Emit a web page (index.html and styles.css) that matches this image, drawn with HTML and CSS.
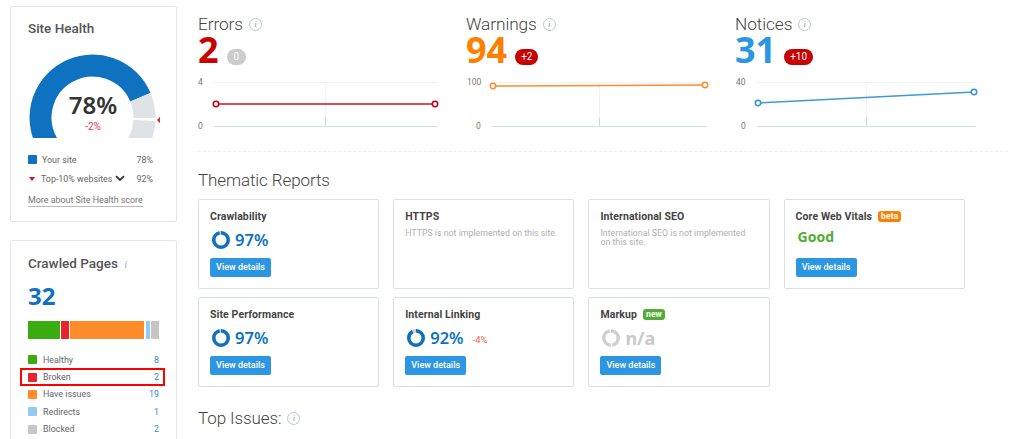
FILE: index.html
```html
<!DOCTYPE html>
<html lang="en">
<head>
<meta charset="utf-8">
<title>Site Audit</title>
<link rel="stylesheet" href="styles.css">
</head>
<body>
<div class="page">
  <aside class="side">
    <section class="panel health">
      <h2 class="panel-title">Site Health</h2>
      <div class="gauge">
        <svg class="gauge-svg" viewBox="28 54 134 84" width="134" height="84">
          <path class="arc-blue" d="M49.9 147.3A52 52 0 1 1 140.4 97.2"/>
          <path class="arc-gray" d="M140.4 97.2A52 52 0 0 1 144.5 118"/>
          <path class="arc-gray" d="M144.5 120.5A52 52 0 0 1 135.1 147.3"/>
          <path class="marker" d="M157 120l3-3.2v6.4z"/>
        </svg>
        <div class="gauge-label">
          <div class="gauge-value">78%</div>
          <div class="gauge-delta">-2%</div>
        </div>
      </div>
      <ul class="legend health-legend">
        <li class="legend-row"><span class="sq sq-site"></span><span class="legend-name">Your site</span><span class="legend-num">78%</span></li>
        <li class="legend-row"><span class="tri"></span><span class="legend-name">Top-10% websites</span>
          <svg class="chev" viewBox="0 0 10 7" width="10" height="7"><path d="M1 1.2l4 3.8 4-3.8"/></svg>
          <span class="legend-num">92%</span></li>
      </ul>
      <a class="more" href="#">More about Site Health score</a>
    </section>
    <section class="panel crawled">
      <h2 class="panel-title">Crawled Pages <span class="mini-i">i</span></h2>
      <div class="crawl-count">32</div>
      <div class="stack">
        <span class="seg seg-g"></span><span class="seg seg-r"></span><span class="seg seg-o"></span><span class="seg seg-b"></span><span class="seg seg-k"></span>
      </div>
      <ul class="legend crawl-legend">
        <li class="legend-row"><span class="sq sq-g"></span><span class="legend-name">Healthy</span><span class="legend-link">8</span></li>
        <li class="legend-row is-marked"><span class="sq sq-r"></span><span class="legend-name">Broken</span><span class="legend-link">2</span></li>
        <li class="legend-row"><span class="sq sq-o"></span><span class="legend-name">Have issues</span><span class="legend-link">19</span></li>
        <li class="legend-row"><span class="sq sq-b"></span><span class="legend-name">Redirects</span><span class="legend-link">1</span></li>
        <li class="legend-row"><span class="sq sq-k"></span><span class="legend-name">Blocked</span><span class="legend-link">2</span></li>
      </ul>
    </section>
  </aside>

  <main class="main">
    <section class="stats">
      <div class="stat">
        <h2 class="stat-title">Errors <span class="info">i</span></h2>
        <div class="stat-nums"><span class="stat-num num-red">2</span><span class="pill pill-gray">0</span></div>
        <svg class="chart" viewBox="198 70 260 60" width="260" height="60">
          <text class="tick" x="198" y="85">4</text>
          <text class="tick" x="198" y="128.500">0</text>
          <path class="grid-top" d="M214 82.500H438"/>
          <path class="grid-mid" d="M325.500 82V118"/>
          <path class="grid-low" d="M325.500 118V126"/>
          <path class="grid-base" d="M214 126.500H438"/>
          <path class="line line-red" d="M216 104H435"/>
          <circle class="dot dot-red" cx="216" cy="104" r="2.700"/>
          <circle class="dot dot-red" cx="435" cy="104" r="2.700"/>
        </svg>
      </div>
      <div class="stat">
        <h2 class="stat-title">Warnings <span class="info">i</span></h2>
        <div class="stat-nums"><span class="stat-num num-orange">94</span><span class="pill pill-red">+2</span></div>
        <svg class="chart" viewBox="466 70 260 60" width="260" height="60">
          <text class="tick" x="467" y="85">100</text>
          <text class="tick" x="476" y="128.500">0</text>
          <path class="grid-top" d="M492 82.500H707"/>
          <path class="grid-mid" d="M599.500 82V118"/>
          <path class="grid-low" d="M599.500 118V126"/>
          <path class="grid-base" d="M492 126.500H707"/>
          <path class="line line-orange" d="M493 86L705 85"/>
          <circle class="dot dot-orange" cx="493" cy="86" r="2.700"/>
          <circle class="dot dot-orange" cx="705" cy="85" r="2.700"/>
        </svg>
      </div>
      <div class="stat">
        <h2 class="stat-title">Notices <span class="info">i</span></h2>
        <div class="stat-nums"><span class="stat-num num-blue">31</span><span class="pill pill-red">+10</span></div>
        <svg class="chart" viewBox="735 70 260 60" width="260" height="60">
          <text class="tick" x="736" y="85">40</text>
          <text class="tick" x="741" y="128.500">0</text>
          <path class="grid-top" d="M757 82.500H976"/>
          <path class="grid-mid" d="M866.500 82V118"/>
          <path class="grid-low" d="M866.500 118V126"/>
          <path class="grid-base" d="M757 126.500H976"/>
          <path class="line line-blue" d="M758 103L974 92"/>
          <circle class="dot dot-blue" cx="758" cy="103" r="2.700"/>
          <circle class="dot dot-blue" cx="974" cy="92" r="2.700"/>
        </svg>
      </div>
    </section>

    <h2 class="section-title thematic">Thematic Reports</h2>
    <section class="reports">
      <article class="report">
        <h3 class="report-title">Crawlability</h3>
        <div class="metric">
          <svg class="ring" viewBox="0 0 20 20" width="20" height="20"><circle class="ring-bg" cx="10" cy="10" r="7.250"/><circle class="ring-fg" cx="10" cy="10" r="7.250" pathLength="100" stroke-dasharray="97 3"/></svg>
          <span class="metric-num">97%</span>
        </div>
        <a class="btn" href="#">View details</a>
      </article>
      <article class="report">
        <h3 class="report-title">HTTPS</h3>
        <p class="report-note">HTTPS is not implemented on this site.</p>
      </article>
      <article class="report">
        <h3 class="report-title">International SEO</h3>
        <p class="report-note report-note-wrap">International SEO is not implemented on this site.</p>
      </article>
      <article class="report">
        <h3 class="report-title">Core Web Vitals <span class="tag tag-beta">beta</span></h3>
        <div class="metric"><span class="good">Good</span></div>
        <a class="btn" href="#">View details</a>
      </article>
      <article class="report">
        <h3 class="report-title">Site Performance</h3>
        <div class="metric">
          <svg class="ring" viewBox="0 0 20 20" width="20" height="20"><circle class="ring-bg" cx="10" cy="10" r="7.250"/><circle class="ring-fg" cx="10" cy="10" r="7.250" pathLength="100" stroke-dasharray="97 3"/></svg>
          <span class="metric-num">97%</span>
        </div>
        <a class="btn" href="#">View details</a>
      </article>
      <article class="report">
        <h3 class="report-title">Internal Linking</h3>
        <div class="metric">
          <svg class="ring" viewBox="0 0 20 20" width="20" height="20"><circle class="ring-bg" cx="10" cy="10" r="7.250"/><circle class="ring-fg" cx="10" cy="10" r="7.250" pathLength="100" stroke-dasharray="92 8"/></svg>
          <span class="metric-num">92%</span><span class="metric-delta">-4%</span>
        </div>
        <a class="btn" href="#">View details</a>
      </article>
      <article class="report">
        <h3 class="report-title">Markup <span class="tag tag-new">new</span></h3>
        <div class="metric">
          <svg class="ring" viewBox="0 0 20 20" width="20" height="20"><circle class="ring-na" cx="10" cy="10" r="7.250" pathLength="100" stroke-dasharray="47 3"/></svg>
          <span class="metric-num metric-na">n/a</span>
        </div>
        <a class="btn" href="#">View details</a>
      </article>
    </section>
    <h2 class="section-title issues">Top Issues: <span class="info">i</span></h2>
  </main>
</div>
</body>
</html>
```
FILE: styles.css
```css
* { box-sizing: border-box; }
html, body { margin: 0; height: 100%; overflow: hidden; background: #fff; }
body { font-family: Roboto, "Noto Sans", sans-serif; color: #555; }
h2, h3, p, ul { margin: 0; padding: 0; font-weight: normal; }
ul { list-style: none; }
a { text-decoration: none; }

.page { display: flex; align-items: flex-start; gap: 21px; padding: 6px 0 0 10px; }
.side { width: 167px; flex: none; display: flex; flex-direction: column; gap: 18px; }
.main { width: 810px; flex: none; }

.panel { border: 1px solid #e2e4e5; border-radius: 2px; padding: 0 17px; }
.health { height: 216px; }
.crawled { height: 240px; }
.panel-title { font-size: 13.500px; line-height: 18px; color: #555; font-weight: 500; }
.health .panel-title { padding-top: 12px; height: 30px; }

.gauge { position: relative; margin-top: 17px; height: 84px; }
.gauge-svg { display: block; }
.arc-blue, .arc-gray { fill: none; stroke-width: 22; }
.arc-blue { stroke: #0e72c0; }
.arc-gray { stroke: #dfe3e6; }
.marker { fill: #e3242b; }
.gauge-label { position: absolute; left: 20px; top: 36px; width: 90px; text-align: center; }
.gauge-value { font-family: "Noto Sans", sans-serif; font-size: 24px; line-height: 30px; font-weight: 600; color: #333; }
.gauge-delta { font-size: 10px; line-height: 13px; color: #f0343c; }

.legend-row { display: flex; align-items: center; font-size: 8.900px; color: #666; position: relative; }
.health-legend { margin-top: 12px; width: 125px; }
.health-legend .legend-row { height: 19px; }
.legend-name { margin-left: 5px; }
.legend-num, .legend-link { margin-left: auto; }
.legend-link { color: #2d8fd6; }
.sq { width: 9px; height: 9px; border-radius: 1px; flex: none; }
.sq-site { background: #0e72c0; }
.sq-g, .seg-g { background: #3aab10; }
.sq-r, .seg-r { background: #e8242d; }
.sq-o, .seg-o { background: #ff8c2a; }
.sq-b, .seg-b { background: #93c9f3; }
.sq-k, .seg-k { background: #c6c6c6; }
.tri { width: 0; height: 0; margin: 0 1px; border: 3.500px solid transparent; border-top: 4px solid #d5121c; border-bottom: 0; flex: none; }
.chev { margin-left: 3px; fill: none; stroke: #333; stroke-width: 1.800; flex: none; }
.more { display: inline-block; margin-top: 2px; font-size: 8.900px; line-height: 12px; color: #777; border-bottom: 1px solid #bbb; white-space: nowrap; }

.crawled .panel-title { padding-top: 13px; height: 31px; }
.mini-i { font-family: "Liberation Serif", serif; font-style: italic; font-size: 11px; color: #a5adb3; margin-left: 3px; }
.crawl-count { font-family: "Noto Sans", sans-serif; font-size: 24px; line-height: 30px; font-weight: 700; color: #0e72c0; margin-top: 9px; }
.stack { display: flex; gap: 1px; height: 18px; margin-top: 10px; width: 131px; }
.seg { display: block; height: 100%; }
.seg-g { width: 32px; }
.seg-r { width: 8px; }
.seg-o { width: 75px; }
.seg-b { width: 4px; margin-left: 1px; }
.seg-k { width: 8px; }
.crawl-legend { margin-top: 12px; width: 131px; }
.crawl-legend .legend-row { height: 17.400px; }
.crawl-legend .legend-name { margin-left: 6px; }
.is-marked::after { content: ""; position: absolute; left: -8px; right: -6px; top: 0; bottom: 0; border: 2px solid #f00; }

.stats { display: grid; grid-template-columns: 268px 269px 1fr; height: 146px; border-bottom: 1px dashed #eceff1; }
.stat-title { font-size: 17.300px; letter-spacing: -0.100px; font-weight: 300; line-height: 24px; height: 24px; margin-top: 6px; color: #444; display: flex; align-items: center; gap: 6px; }
.info { display: inline-flex; width: 13px; height: 13px; align-items: center; justify-content: center; border: 1px solid #b9c6d0; border-radius: 50%; font-family: "Liberation Serif", serif; font-style: italic; font-size: 9px; color: #8f9ba5; font-weight: normal; letter-spacing: 0; }
.stat-nums { display: flex; align-items: flex-end; height: 34px; margin-top: -3px; }
.stat-num { font-family: "Noto Sans", sans-serif; font-size: 36px; line-height: 34px; font-weight: 700; }
.num-red { color: #c90000; }
.num-orange { color: #ff8000; }
.num-blue { color: #2d96e3; }
.pill { height: 16px; border-radius: 8px; margin-left: 8px; margin-bottom: 2px; padding: 0 6px; font-size: 10px; line-height: 16px; color: #fff; }
.pill-gray { background: #ccc; padding: 0 7px; }
.pill-red { background: #c90000; }
.chart { display: block; margin-top: 3px; }
.tick { font-size: 8.500px; fill: #777; }
.grid-top, .grid-mid { stroke: #f0f3f5; fill: none; }
.grid-low { stroke: #c9d8e6; fill: none; }
.grid-base { stroke: #d3dfe9; fill: none; }
.line { fill: none; stroke-width: 1.500; }
.line-red { stroke: #d8121c; }
.line-orange { stroke: #ff8c2a; }
.line-blue { stroke: #3d9bd6; }
.dot { fill: #fff; stroke-width: 1.500; }
.dot-red { stroke: #c90012; }
.dot-orange { stroke: #ff8c2a; }
.dot-blue { stroke: #2f93cf; }

.section-title { font-size: 17px; letter-spacing: -0.100px; font-weight: 300; line-height: 24px; color: #444; display: flex; align-items: center; gap: 6px; }
.thematic { margin-top: 16px; }
.issues { margin-top: 19px; }
.reports { display: grid; grid-template-columns: repeat(4, 181.200px); grid-auto-rows: 90px; gap: 8px 14px; margin-top: 7px; }
.report { border: 1px solid #d9e0e3; border-radius: 2px; padding: 10px 11px 0; display: flex; flex-direction: column; align-items: flex-start; }
.report-title { font-size: 10.500px; line-height: 13px; font-weight: 700; color: #444; display: flex; align-items: center; gap: 6px; white-space: nowrap; letter-spacing: 0.100px; }
.report-note { font-size: 8.800px; line-height: 9px; color: #b0b0b0; margin-top: 6px; }
.report-note-wrap { max-width: 148px; }
.metric { display: flex; align-items: center; height: 20px; margin-top: 7px; }
.ring { display: block; flex: none; transform: rotate(-90deg); margin-left: 1px; }
.ring-bg { fill: none; stroke: #cfcfcf; stroke-width: 3.500; }
.ring-fg { fill: none; stroke: #0e72c0; stroke-width: 3.500; }
.ring-na { fill: none; stroke: #cfcfcf; stroke-width: 3.500; }
.metric-num { font-family: "Noto Sans", sans-serif; font-size: 16.500px; line-height: 20px; font-weight: 600; color: #0e72c0; margin-left: 4px; }
.metric-na { color: #c9c9c9; font-weight: 700; font-size: 18px; }
.metric-delta { font-size: 9.500px; color: #f25a5a; margin-left: 9px; margin-top: 3px; }
.good { font-family: "Noto Sans", sans-serif; font-size: 14px; line-height: 14px; font-weight: 700; color: #4fae33; margin-left: 2px; align-self: flex-start; }
.btn { display: block; margin-top: 8px; height: 19px; width: 61px; background: #2d96e3; border-radius: 2px; color: #fff; font-size: 9px; font-weight: 500; line-height: 19px; text-align: center; white-space: nowrap; }
.tag { font-size: 8.500px; line-height: 11px; height: 11px; padding: 0 3px; color: #fff; border-radius: 3px; font-weight: 700; }
.tag-beta { background: #ff8000; }
.tag-new { background: #4fae33; }
```
